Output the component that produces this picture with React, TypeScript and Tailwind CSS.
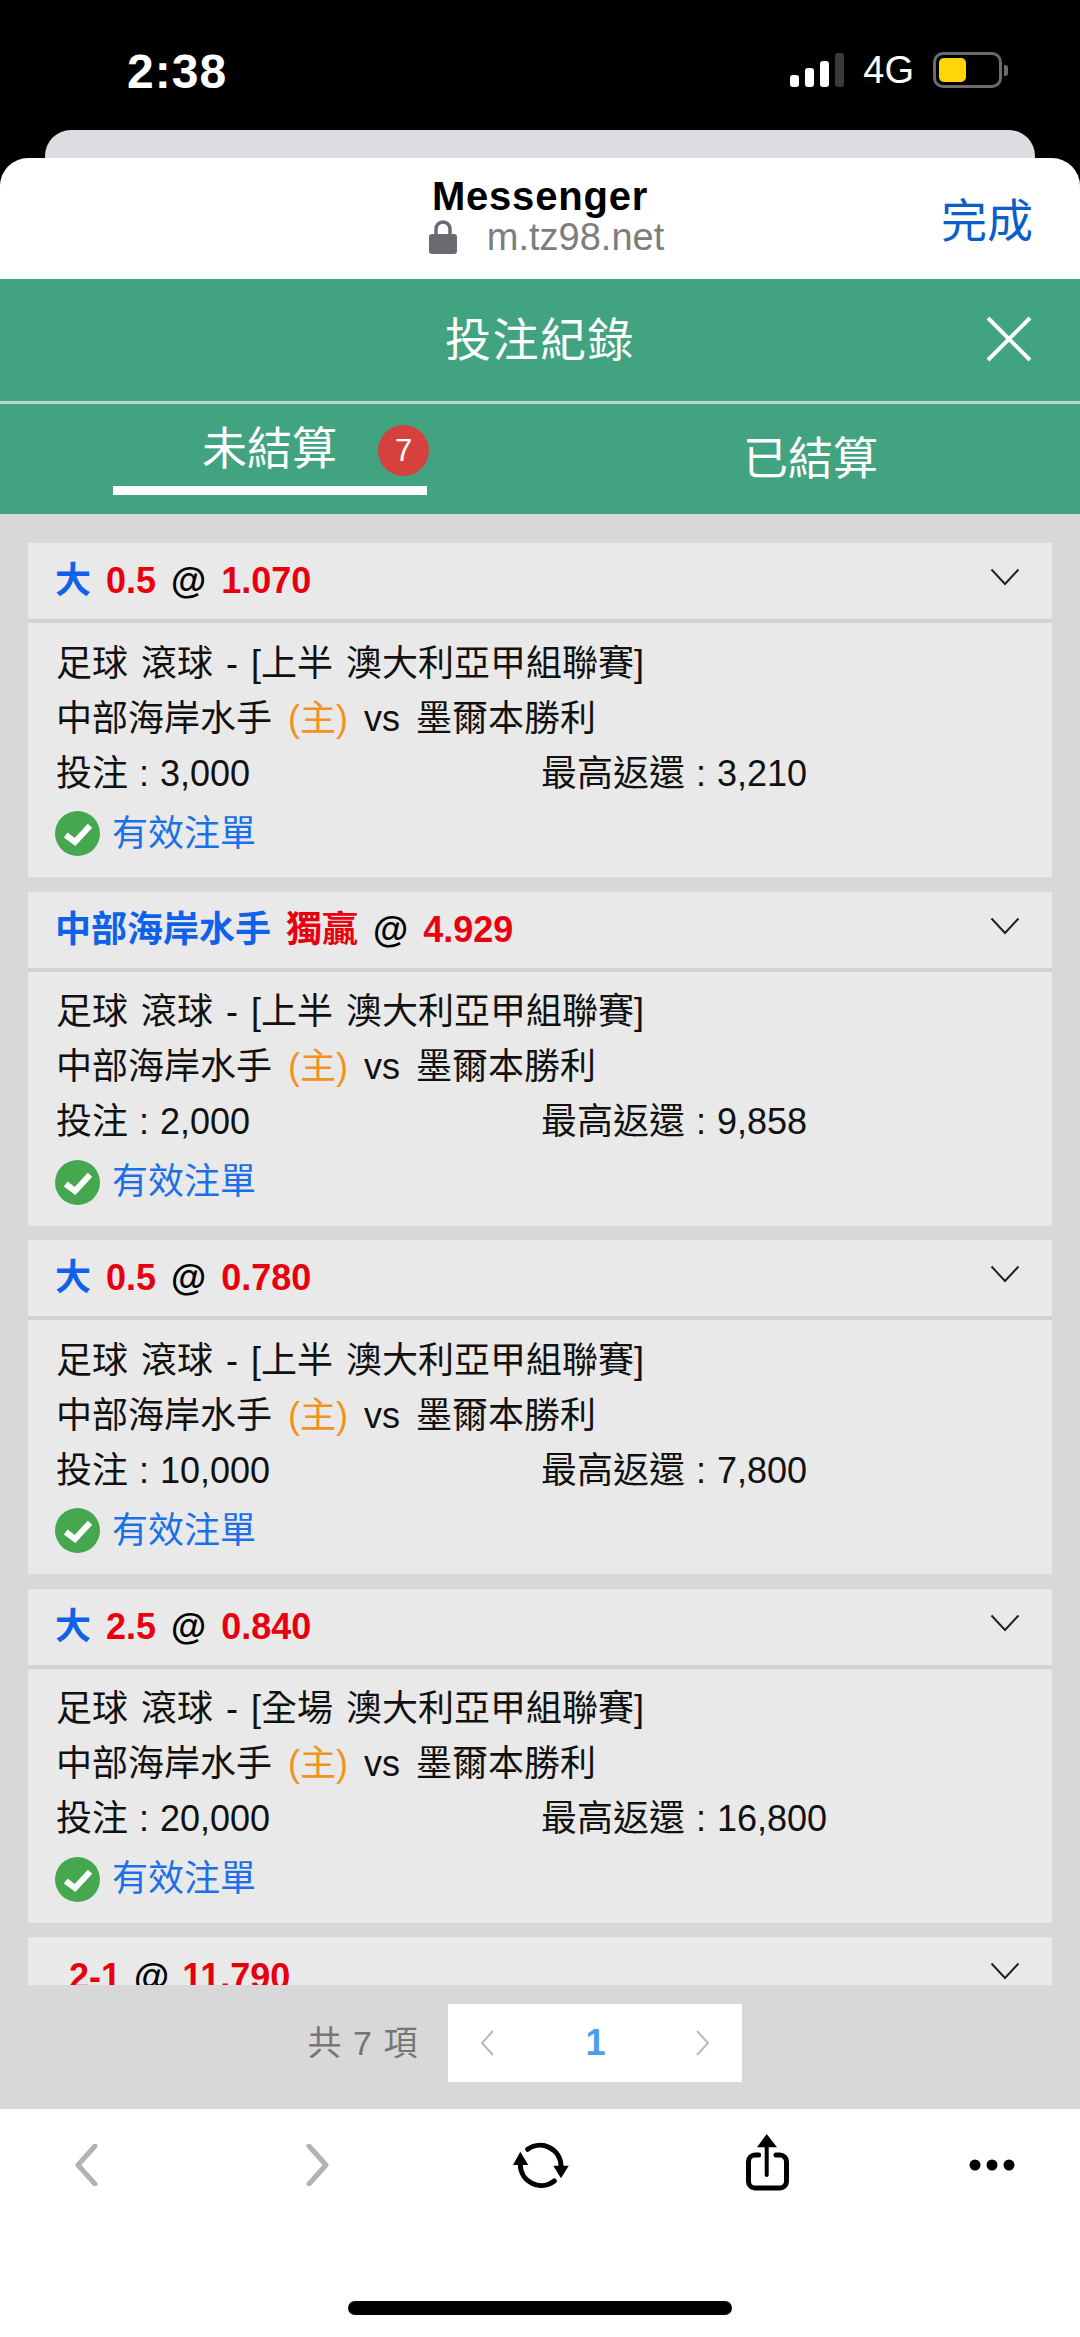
import React from "react";

const FONT = "font-['Liberation_Sans','Noto_Sans_CJK_TC',sans-serif]";

type Bet = {
  pick?: string;
  line?: string;
  odds: string;
  period?: string;
  stake?: string;
  maxReturn?: string;
};

const bets: Bet[] = [
  { pick: "大", line: "0.5", odds: "1.070", period: "上半", stake: "3,000", maxReturn: "3,210" },
  { pick: "中部海岸水手", line: "獨贏", odds: "4.929", period: "上半", stake: "2,000", maxReturn: "9,858" },
  { pick: "大", line: "0.5", odds: "0.780", period: "上半", stake: "10,000", maxReturn: "7,800" },
  { pick: "大", line: "2.5", odds: "0.840", period: "全場", stake: "20,000", maxReturn: "16,800" },
];

function Chevron() {
  return (
    <svg width="30" height="18" viewBox="0 0 30 18" fill="none" className="shrink-0">
      <path d="M1.5 1.5 L15 16 L28.5 1.5" stroke="#222" strokeWidth="2" />
    </svg>
  );
}

function CheckBadge() {
  return (
    <svg width="45" height="45" viewBox="0 0 45 45" className="shrink-0">
      <circle cx="22.5" cy="22.5" r="22.5" fill="#45a84f" />
      <path d="M10.7 24 L20 31 L35 14.7" fill="none" stroke="#fff" strokeWidth="6" />
    </svg>
  );
}

function BetCard({ bet }: { bet: Bet }) {
  return (
    <div className="shrink-0 bg-[#e9e9e9]">
      <div className="h-[76px] pl-[27px] pr-[32px] flex items-center justify-between">
        <div className="text-[36px] leading-none font-bold whitespace-pre text-[#e8000f] [word-spacing:5px]">
          <span className="text-[#0f62e8]">{bet.pick}</span> {bet.line} <span className="text-black">@</span> {bet.odds}
        </div>
        <div className="-mt-[8px]">
          <Chevron />
        </div>
      </div>
      <div className="h-[4px] bg-[#d3d3d3]" />
      <div className="h-[254px] pl-[28px] pt-[13px] text-[36px] text-[#111]">
        <div className="h-[55px] flex items-center whitespace-pre [word-spacing:3px]">足球 滾球 - [{bet.period} 澳大利亞甲組聯賽]</div>
        <div className="h-[55px] flex items-center whitespace-pre [word-spacing:6px]">
          中部海岸水手 <span className="text-[#f0921e]">(主)</span> vs 墨爾本勝利
        </div>
        <div className="h-[55px] grid grid-cols-[485px_1fr] items-center whitespace-pre [word-spacing:1px]">
          <div>投注 : {bet.stake}</div>
          <div>最高返還 : {bet.maxReturn}</div>
        </div>
        <div className="h-[55px] mt-[5px] -ml-[1px] flex items-center gap-[12px] text-[#1c6fe6]">
          <CheckBadge />
          <span>有效注單</span>
        </div>
      </div>
    </div>
  );
}

function StatusBar() {
  return (
    <div className="h-[130px] bg-black pl-[127px] pr-[72px] pt-[52px] flex items-start justify-between text-white">
      <div className="text-[48px] leading-[40px] font-bold tracking-[1px]">2:38</div>
      <div className="flex items-center gap-[19px] h-[36px]">
        <div className="flex items-end gap-[6px] h-[34px]">
          <div className="w-[9px] h-[12px] rounded-[3px] bg-white" />
          <div className="w-[9px] h-[19px] rounded-[3px] bg-white" />
          <div className="w-[9px] h-[26px] rounded-[3px] bg-white" />
          <div className="w-[9px] h-[34px] rounded-[3px] bg-[#3a3a3a]" />
        </div>
        <div className="text-[38px] leading-none">4G</div>
        <div className="flex items-center gap-[2px]">
          <div className="w-[69px] h-[36px] rounded-[10px] border-[3px] border-[#6b6b6b] p-[3px]">
            <div className="w-[27px] h-full rounded-[5px] bg-[#ffd60a]" />
          </div>
          <div className="w-[4px] h-[11px] rounded-r-[3px] bg-[#6b6b6b]" />
        </div>
      </div>
    </div>
  );
}

function BrowserHeader() {
  return (
    <div className="bg-black">
      <div className="px-[45px]">
        <div className="h-[28px] rounded-t-[26px] bg-[#dcdde0]" />
      </div>
      <div className="h-[121px] rounded-t-[28px] bg-white relative flex flex-col items-center pt-[15px]">
        <div className="text-[40px] leading-[46px] font-bold text-black tracking-[0.8px]">Messenger</div>
        <div className="flex items-center gap-[30px] -mt-[2px] ml-[13px]">
          <svg width="28" height="34" viewBox="0 0 28 34">
            <path d="M7 15 V9 a7 7 0 0 1 14 0 V15" fill="none" stroke="#6a6b70" strokeWidth="3.5" />
            <rect x="0" y="14" width="28" height="20" rx="3" fill="#6a6b70" />
          </svg>
          <div className="text-[38px] leading-[40px] text-[#7d7d7d]">m.tz98.net</div>
        </div>
        <div className="absolute right-[47px] top-[38px] text-[46px] leading-[50px] text-[#0a60c8]">完成</div>
      </div>
    </div>
  );
}

function GreenHeader() {
  return (
    <div className="bg-[#41a380] text-white">
      <div className="h-[122px] relative flex items-center justify-center">
        <div className="text-[46px] leading-none tracking-[1.5px]">投注紀錄</div>
        <svg width="46" height="46" viewBox="0 0 46 46" className="absolute right-[48px] top-[37px]">
          <path d="M2 2 L44 44 M44 2 L2 44" stroke="#fff" strokeWidth="4" fill="none" />
        </svg>
      </div>
      <div className="h-[3px] bg-[#b6d6c9]" />
      <div className="h-[110px] grid grid-cols-2">
        <div className="pl-[113px] pt-[21px]">
          <div className="w-[314px] h-[70px] border-b-[9px] border-white flex items-start pl-[89px] gap-[41px] whitespace-nowrap">
            <span className="text-[45px] leading-[50px]">未結算</span>
            <span className="w-[51px] h-[51px] rounded-full bg-[#d6413d] flex items-center justify-center text-[31px] leading-none shrink-0">7</span>
          </div>
        </div>
        <div className="pl-[203px] pt-[31px]">
          <span className="text-[45px] leading-[50px]">已結算</span>
        </div>
      </div>
    </div>
  );
}

function Pagination() {
  return (
    <div className="flex-1 flex items-start justify-center pt-[19px] pr-[30px]">
      <div className="h-[78px] flex items-center text-[34px] text-[#767676] tracking-[1px] mr-[30px]">共 7 項</div>
      <div className="w-[294px] h-[78px] bg-white flex items-center justify-between px-[32px]">
        <svg width="14" height="26" viewBox="0 0 14 26" fill="none">
          <path d="M13 1 L2 13 L13 25" stroke="#b9b9b9" strokeWidth="2" />
        </svg>
        <span className="text-[36px] leading-none font-bold text-[#4a9ef0]">1</span>
        <svg width="14" height="26" viewBox="0 0 14 26" fill="none">
          <path d="M1 1 L12 13 L1 25" stroke="#b9b9b9" strokeWidth="2" />
        </svg>
      </div>
    </div>
  );
}

function Toolbar() {
  return (
    <div className="h-[228px] bg-white relative pl-[74px] pt-[26px]">
      <div className="h-[60px] flex items-center">
        <svg width="24" height="42" viewBox="0 0 24 42" fill="none" className="mr-[208px]">
          <path d="M21 2 L4 21 L21 40" stroke="#b0b2b5" strokeWidth="5" strokeLinecap="round" strokeLinejoin="round" />
        </svg>
        <svg width="24" height="42" viewBox="0 0 24 42" fill="none" className="mr-[183px]">
          <path d="M3 2 L20 21 L3 40" stroke="#b0b2b5" strokeWidth="5" strokeLinecap="round" strokeLinejoin="round" />
        </svg>
        <svg width="56" height="46" viewBox="0 0 56 46" fill="none" className="mr-[177px]">
          <path d="M14.7 7.3 A21 21 0 0 1 48 23.7" stroke="#000" strokeWidth="5" strokeLinecap="round" />
          <path d="M7.3 23 A21 21 0 0 0 41.3 39" stroke="#000" strokeWidth="5" strokeLinecap="round" />
          <path d="M7.3 9.7 L15.3 23 L0 23 Z" fill="#000" />
          <path d="M40.3 23.7 L55.7 23.7 L48 36.3 Z" fill="#000" />
        </svg>
        <svg width="44" height="58" viewBox="0 0 44 58" fill="none" className="mr-[179px] -mt-[5px]">
          <path d="M12.7 21 H9 a6.5 6.5 0 0 0 -6.5 6.5 V47.5 a6.5 6.5 0 0 0 6.5 6.5 H34 a6.5 6.5 0 0 0 6.5 -6.5 V27.5 a6.5 6.5 0 0 0 -6.5 -6.5 H30" stroke="#000" strokeWidth="5" strokeLinecap="round" />
          <path d="M20.7 11 V41" stroke="#000" strokeWidth="4" strokeLinecap="round" />
          <path d="M20.7 0 L31 13.3 L11 13.3 Z" fill="#000" />
        </svg>
        <svg width="46" height="12" viewBox="0 0 46 12">
          <circle cx="6" cy="6" r="5.5" fill="#000" />
          <circle cx="23" cy="6" r="5.5" fill="#000" />
          <circle cx="40" cy="6" r="5.5" fill="#000" />
        </svg>
      </div>
      <div className="absolute left-[348px] bottom-[22px] w-[384px] h-[14px] rounded-full bg-black" />
    </div>
  );
}

export default function App() {
  return (
    <div className={`w-[1080px] h-[2337px] flex flex-col overflow-hidden bg-white ${FONT}`}>
      <StatusBar />
      <BrowserHeader />
      <GreenHeader />
      <div className="h-[1595px] bg-[#d8d8d8] flex flex-col">
        <div className="h-[1471px] overflow-hidden pt-[29px] px-[28px] flex flex-col gap-[14.5px]">
          {bets.map((bet, i) => (
            <BetCard key={i} bet={bet} />
          ))}
          <div className="shrink-0 bg-[#e9e9e9]">
            <div className="h-[76px] pl-[41px] pr-[32px] flex items-center justify-between">
              <div className="text-[36px] leading-none font-bold whitespace-pre text-[#e8000f] mt-[3px] [word-spacing:3px]">
                2-1 <span className="text-black">@</span> 11.790
              </div>
              <div className="-mt-[8px]">
                <Chevron />
              </div>
            </div>
          </div>
        </div>
        <Pagination />
      </div>
      <Toolbar />
    </div>
  );
}
